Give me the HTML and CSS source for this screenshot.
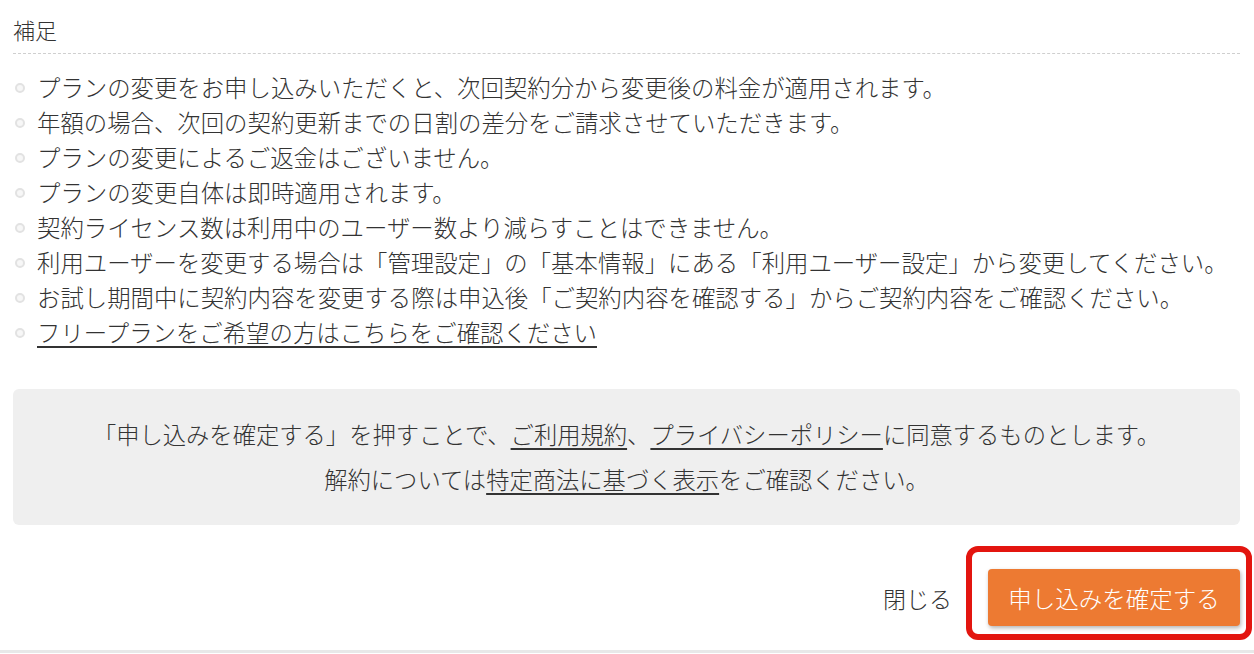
FILE: index.html
```html
<!DOCTYPE html>
<html lang="ja">
<head>
<meta charset="utf-8">
<link rel="stylesheet" href="styles.css">
</head>
<body>
<div class="modal">
  <div class="content">
    <h2 class="title">補足</h2>
    <ul class="notes">
      <li>プランの変更をお申し込みいただくと、次回契約分から変更後の料金が適用されます。</li>
      <li>年額の場合、次回の契約更新までの日割の差分をご請求させていただきます。</li>
      <li>プランの変更によるご返金はございません。</li>
      <li>プランの変更自体は即時適用されます。</li>
      <li>契約ライセンス数は利用中のユーザー数より減らすことはできません。</li>
      <li>利用ユーザーを変更する場合は「管理設定」の「基本情報」にある「利用ユーザー設定」から変更してください。</li>
      <li>お試し期間中に契約内容を変更する際は申込後「ご契約内容を確認する」からご契約内容をご確認ください。</li>
      <li><a class="link" href="#">フリープランをご希望の方はこちらをご確認ください</a></li>
    </ul>
    <div class="agree">
      <p>「申し込みを確定する」を押すことで、<a class="link" href="#">ご利用規約</a>、<a class="link" href="#">プライバシーポリシー</a>に同意するものとします。</p>
      <p>解約については<a class="link" href="#">特定商法に基づく表示</a>をご確認ください。</p>
    </div>
    <div class="footer">
      <span class="close">閉じる</span>
      <button class="confirm">申し込みを確定する</button>
    </div>
  </div>
  <div class="bottom-line"></div>
  <div class="highlight"></div>
</div>
</body>
</html>
```
FILE: styles.css
```css
html, body {
  margin: 0;
  padding: 0;
  background: #ffffff;
}
body {
  font-family: "Noto Sans CJK JP", "Noto Sans", sans-serif;
  font-weight: 300;
  color: #333333;
}
.modal {
  position: relative;
  width: 1254px;
  height: 654px;
  overflow: hidden;
}
.content {
  padding: 0 14px 0 13px;
}
.title {
  margin: 0;
  padding: 11px 0 6px 0;
  font-size: 22px;
  font-weight: 300;
  line-height: 36px;
  border-bottom: 1px dashed #cfcfcf;
}
.notes {
  list-style: none;
  margin: 16px 0 0;
  padding: 0 0 2px;
}
.notes li {
  display: flex;
  align-items: center;
  font-size: 23.4px;
  line-height: 35px;
}
.notes li::before {
  content: "";
  flex: none;
  width: 6px;
  height: 6px;
  border-radius: 50%;
  border: 2px solid #e2e2e2;
  background: #f7f7f7;
  margin: 0 12px 0 2px;
}
.link {
  color: #333333;
  text-decoration: underline;
  text-decoration-thickness: 2px;
  text-underline-offset: 4px;
}
.agree {
  margin-top: 37px;
  background: #efefef;
  border-radius: 6px;
  padding: 23px 0;
  text-align: center;
}
.agree p {
  margin: 0;
  font-size: 23.3px;
  line-height: 45px;
}
.footer {
  margin-top: 44px;
  display: flex;
  justify-content: flex-end;
  align-items: center;
  gap: 36px;
}
.close {
  font-size: 23px;
  line-height: 30px;
}
.confirm {
  width: 252px;
  height: 57px;
  border: none;
  border-radius: 4px;
  background: #ed7a32;
  color: #ffffff;
  font-family: "Noto Sans CJK JP", "Noto Sans", sans-serif;
  font-weight: 300;
  font-size: 23.5px;
  box-shadow: 1px 2px 4px rgba(0, 0, 0, 0.3);
}
.bottom-line {
  margin-top: 24px;
  height: 3px;
  background: #e8e8e8;
}
.highlight {
  position: absolute;
  left: 966px;
  top: 546px;
  width: 274px;
  height: 82px;
  border: 6px solid #e3150f;
  border-radius: 12px;
}
```
